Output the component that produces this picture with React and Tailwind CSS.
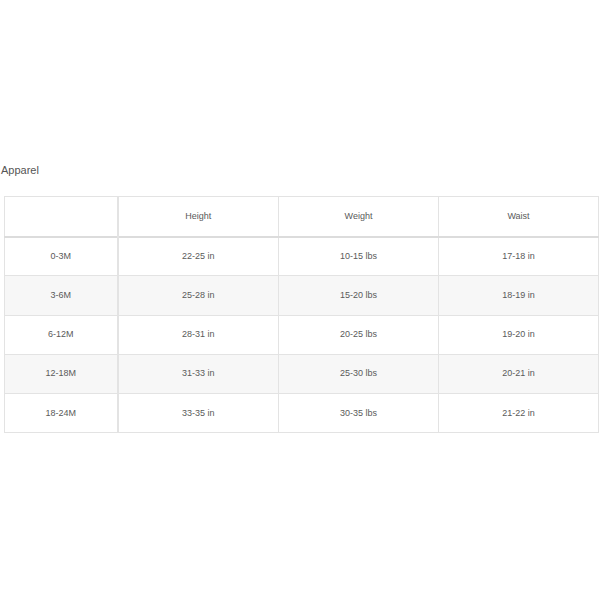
import React from 'react';

const rows = [
  ['0-3M', '22-25 in', '10-15 lbs', '17-18 in'],
  ['3-6M', '25-28 in', '15-20 lbs', '18-19 in'],
  ['6-12M', '28-31 in', '20-25 lbs', '19-20 in'],
  ['12-18M', '31-33 in', '25-30 lbs', '20-21 in'],
  ['18-24M', '33-35 in', '30-35 lbs', '21-22 in'],
];

const App = () => {
  return (
    <div className="w-[600px] h-[600px] bg-white pt-[162px] text-[#5a5a5a]" style={{ fontFamily: '"Liberation Sans", Arial, sans-serif' }}>
      <h2 className="text-[11px] leading-4 pl-px mb-[18px] text-[#555]">Apparel</h2>
      <table className="ml-1 w-[595px] border-collapse border border-[#e3e3e3] text-[9px] text-center table-fixed">
        <thead>
          <tr className="h-[40px] border-b-2 border-[#dcdcdc]">
            <th className="w-[113px] font-normal border-r-2 border-[#e3e3e3]"></th>
            <th className="w-[161px] font-normal border-r border-[#e3e3e3]">Height</th>
            <th className="w-[160px] font-normal border-r border-[#e3e3e3]">Weight</th>
            <th className="font-normal">Waist</th>
          </tr>
        </thead>
        <tbody>
          {rows.map((row, i) => (
            <tr key={i} className={`h-[39.3px] border-t border-[#e3e3e3] ${i % 2 === 1 ? 'bg-[#f7f7f7]' : 'bg-white'}`}>
              <td className="border-r-2 border-[#e3e3e3]">{row[0]}</td>
              <td className="border-r border-[#e3e3e3]">{row[1]}</td>
              <td className="border-r border-[#e3e3e3]">{row[2]}</td>
              <td>{row[3]}</td>
            </tr>
          ))}
        </tbody>
      </table>
    </div>
  );
};

export default App;
